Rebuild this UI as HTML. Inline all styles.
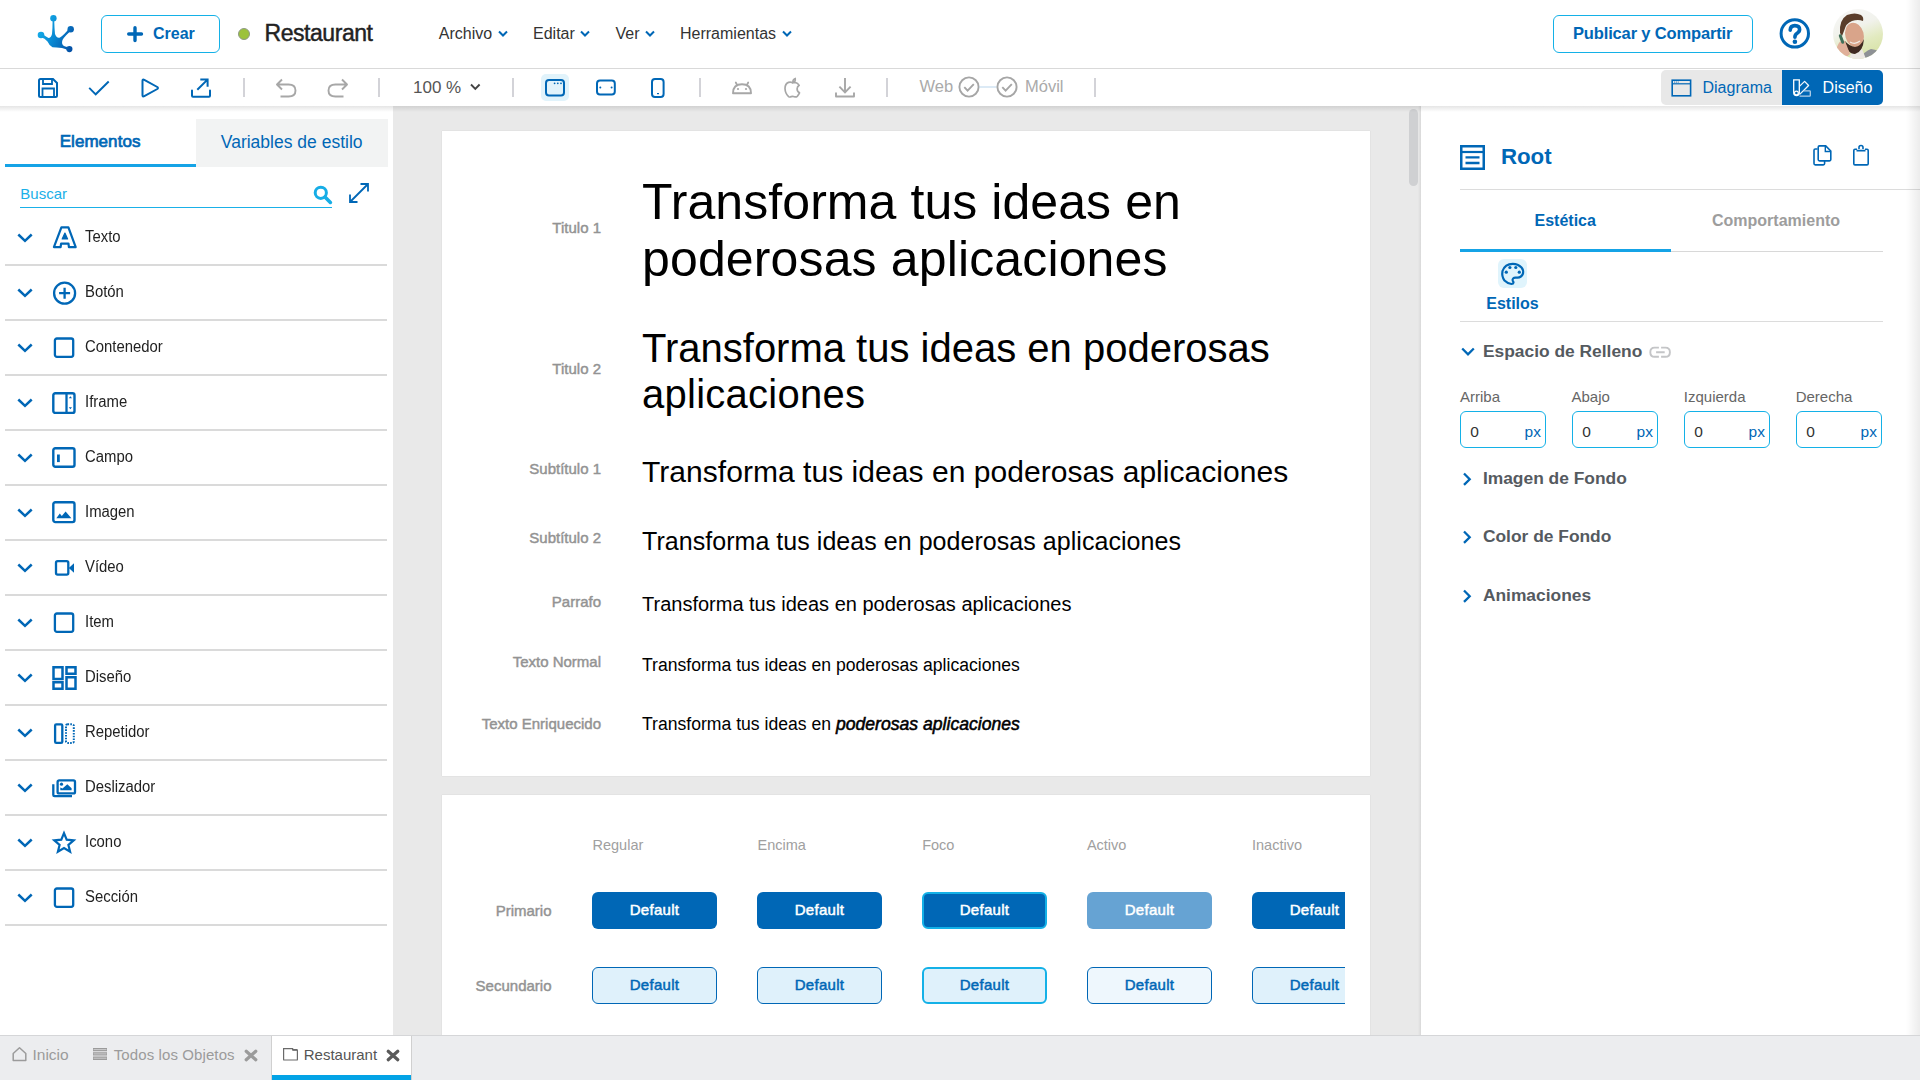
<!DOCTYPE html>
<html><head><meta charset="utf-8"><title>Restaurant</title>
<style>
html,body{margin:0;padding:0;width:1920px;height:1080px;overflow:hidden;background:#fff;}
body{position:relative;font-family:"Liberation Sans",sans-serif;}
.t{position:absolute;white-space:nowrap;}
.r{position:absolute;box-sizing:border-box;}
.s{position:absolute;overflow:visible;}
</style></head><body>
<div class="r" style="left:0px;top:0px;width:1920px;height:68px;background:#fff;"></div>
<div class="r" style="left:0px;top:68px;width:1920px;height:1px;background:#d9d9d9;"></div>
<svg class="s" style="left:30px;top:10px;" width="50" height="50" viewBox="0 0 50 50"><defs><linearGradient id="lg" gradientUnits="userSpaceOnUse" x1="9" y1="20" x2="43" y2="35"><stop offset="0" stop-color="#14abe8"/><stop offset="0.45" stop-color="#0a88d2"/><stop offset="1" stop-color="#0451a6"/></linearGradient></defs>
<g fill="url(#lg)">
<circle cx="23.4" cy="8.3" r="3.2"/><circle cx="11" cy="25" r="3.3"/><circle cx="40.7" cy="19.2" r="3.2"/><circle cx="39.4" cy="39.1" r="3.1"/>
<path d="M11,23 Q15,26 18.5,28 Q21,28 22,24 Q22.6,18 22.6,10 L24.2,10 Q24.4,18 25,24 Q26.5,28.5 30,27.5 Q34,25 39.5,18 L41.5,20.5 Q35,25.5 32.5,30 Q31,34 34,36 Q36.5,37.3 39,37 L40,41 Q36,39 32,38 Q26,37.5 22.5,37.3 Q19.5,36 17.5,31.5 Q15,28 10.5,27 Z"/>
</g></svg>
<div class="r" style="left:101px;top:15px;width:119px;height:38px;border:1.5px solid #14b1e7;border-radius:6px;"></div>
<svg class="s" style="left:127px;top:26px;" width="16" height="16" viewBox="0 0 16 16"><path d="M8,1.7V14.5M1.7,8H14.5" stroke="#0067b6" stroke-width="3.4" stroke-linecap="round"/></svg>
<div class="t" style="left:153px;top:26.00px;font-size:16px;line-height:16px;color:#0067b6;font-weight:bold;">Crear</div>
<div class="r" style="left:238px;top:27.75px;width:12px;height:12px;background:#9cc23c;border-radius:50%;border:1px solid #8f9a86;"></div>
<div class="t" style="left:264.5px;top:22.00px;font-size:23px;line-height:23px;color:#222;letter-spacing:-0.45px;-webkit-text-stroke:0.45px #222;">Restaurant</div>
<div class="t" style="left:438.75px;top:26.00px;font-size:16px;line-height:16px;color:#333;">Archivo</div>
<svg class="s" style="left:498px;top:30px;" width="10" height="8" viewBox="0 0 10 8"><path d="M1,1.5L5,5.5L9,1.5" fill="none" stroke="#0067b6" stroke-width="2"/></svg>
<div class="t" style="left:533px;top:26.00px;font-size:16px;line-height:16px;color:#333;">Editar</div>
<svg class="s" style="left:580px;top:30px;" width="10" height="8" viewBox="0 0 10 8"><path d="M1,1.5L5,5.5L9,1.5" fill="none" stroke="#0067b6" stroke-width="2"/></svg>
<div class="t" style="left:615.5px;top:26.00px;font-size:16px;line-height:16px;color:#333;">Ver</div>
<svg class="s" style="left:645px;top:30px;" width="10" height="8" viewBox="0 0 10 8"><path d="M1,1.5L5,5.5L9,1.5" fill="none" stroke="#0067b6" stroke-width="2"/></svg>
<div class="t" style="left:680px;top:26.00px;font-size:16px;line-height:16px;color:#333;">Herramientas</div>
<svg class="s" style="left:782px;top:30px;" width="10" height="8" viewBox="0 0 10 8"><path d="M1,1.5L5,5.5L9,1.5" fill="none" stroke="#0067b6" stroke-width="2"/></svg>
<div class="r" style="left:1553px;top:15px;width:200px;height:38px;border:1.5px solid #14b1e7;border-radius:6px;"></div>
<div class="t" style="left:1573px;top:25.00px;font-size:16.5px;line-height:16.5px;color:#0067b6;font-weight:bold;letter-spacing:-0.15px;">Publicar y Compartir</div>
<svg class="s" style="left:1779px;top:18px;" width="32" height="32" viewBox="0 0 32 32"><circle cx="15.8" cy="15.4" r="13.7" fill="none" stroke="#0067b6" stroke-width="3"/><path d="M11.2,12.2 Q11.4,7.6 15.9,7.6 Q20.6,7.7 20.6,11.6 Q20.6,13.8 18.2,15.2 Q15.9,16.5 15.9,19.3" fill="none" stroke="#0067b6" stroke-width="3.6" stroke-linecap="round"/><circle cx="15.9" cy="23.8" r="2.3" fill="#0067b6"/></svg>
<svg class="s" style="left:1833px;top:9px;" width="50" height="50" viewBox="0 0 50 50"><defs><clipPath id="av"><circle cx="25" cy="25" r="25"/></clipPath><linearGradient id="avbg" x1="0.2" y1="0" x2="0.6" y2="1"><stop offset="0" stop-color="#f7f7f6"/><stop offset="0.4" stop-color="#f1f2ec"/><stop offset="0.7" stop-color="#e2eabf"/><stop offset="1" stop-color="#d7e2a6"/></linearGradient><filter id="bl"><feGaussianBlur stdDeviation="0.7"/></filter></defs>
<g clip-path="url(#av)"><rect width="50" height="50" fill="url(#avbg)"/>
<g filter="url(#bl)">
<path d="M28,50 Q31,42 38,40 Q46,41 50,45 V50Z" fill="#8e9196"/>
<path d="M16,50 L19,42 L29,40 L33,50Z" fill="#ece8e4"/>
<ellipse cx="21.5" cy="26" rx="9.2" ry="12.5" fill="#d9a48a" transform="rotate(-15 21.5 26)"/>
<path d="M7,24 Q6,11 14,6 Q22,3 28,6 Q31,8 30,12 Q25,10 19,12 Q13,14 11,22 L9,27 Z" fill="#5a3d2a"/>
<path d="M12,32 Q14,45 22,45 Q30,43 31,30 Q28,37 22,38 Q16,37 12,32Z" fill="#3f2c20"/>
<path d="M17,33 Q22,36 27,32" stroke="#f3ece6" stroke-width="1.2" fill="none"/>
<path d="M4,38 Q7,30 12,32 L17,45 L11,50 L3,48 Z" fill="#e0b09a"/>
<rect x="7" y="25" width="3" height="10" rx="1.5" fill="#41705a" transform="rotate(-20 8.5 30)"/>
</g></g></svg>
<div class="r" style="left:0px;top:69px;width:1920px;height:37px;background:#fff;"></div>
<svg class="s" style="left:38px;top:78px;" width="20" height="20" viewBox="0 0 20 20"><path d="M2.5,1H15L19,5V17.5Q19,19 17.5,19H2.5Q1,19 1,17.5V2.5Q1,1 2.5,1Z" fill="none" stroke="#0067b6" stroke-width="2"/><path d="M5,1.5V6H14V1.5" fill="none" stroke="#0067b6" stroke-width="1.8"/><path d="M4.5,19V10.5H16V19" fill="none" stroke="#0067b6" stroke-width="1.8"/></svg>
<svg class="s" style="left:88px;top:80px;" width="22" height="16" viewBox="0 0 22 16"><path d="M1.2,7.8L7.7,14.3L20.7,1.5" fill="none" stroke="#0067b6" stroke-width="1.9"/></svg>
<svg class="s" style="left:140px;top:78px;" width="20" height="20" viewBox="0 0 20 20"><path d="M2.5,2.8Q2.5,0.8 4.3,1.8L17.3,9Q18.6,10 17.3,11L4.3,18.2Q2.5,19.2 2.5,17.2Z" fill="none" stroke="#0067b6" stroke-width="2" stroke-linejoin="round"/></svg>
<svg class="s" style="left:190px;top:78px;" width="22" height="20" viewBox="0 0 22 20"><path d="M2,12.5V17.8Q2,18.8 3,18.8H19Q20,18.8 20,17.8V12.5" fill="none" stroke="#0067b6" stroke-width="2" stroke-linecap="round"/><path d="M7.3,11.8L17.5,1.6M10.3,1.6H17.6V8.8" fill="none" stroke="#0067b6" stroke-width="2"/></svg>
<div class="r" style="left:243px;top:78px;width:2px;height:19px;background:#d3d3d8;"></div>
<svg class="s" style="left:275px;top:78px;" width="23" height="21" viewBox="0 0 23 21"><path d="M2,6.5H13.5Q20.5,6.5 20.5,12.5Q20.5,18.5 13.5,18.5H5.5M7,1.5L2,6.5L7,11.5" fill="none" stroke="#a7a7a7" stroke-width="1.9" stroke-linejoin="round"/></svg>
<svg class="s" style="left:326px;top:78px;" width="23" height="21" viewBox="0 0 23 21"><path d="M21,6.5H9.5Q2.5,6.5 2.5,12.5Q2.5,18.5 9.5,18.5H17.5M16,1.5L21,6.5L16,11.5" fill="none" stroke="#a7a7a7" stroke-width="1.9" stroke-linejoin="round"/></svg>
<div class="r" style="left:378px;top:78px;width:2px;height:19px;background:#d3d3d8;"></div>
<div class="t" style="left:413px;top:79.00px;font-size:17px;line-height:17px;color:#555;">100 %</div>
<svg class="s" style="left:470px;top:83px;" width="11" height="8" viewBox="0 0 11 8"><path d="M1,1.5L5.3,5.8L9.6,1.5" fill="none" stroke="#444" stroke-width="1.9"/></svg>
<div class="r" style="left:512px;top:78px;width:2px;height:19px;background:#d3d3d8;"></div>
<div class="r" style="left:541px;top:74px;width:28px;height:27px;background:#e1f3fb;border-radius:5px;"></div>
<svg class="s" style="left:545px;top:79px;" width="20" height="18" viewBox="0 0 20 18"><rect x="1" y="1" width="18" height="15.5" rx="3" fill="none" stroke="#0067b6" stroke-width="2"/><circle cx="9.6" cy="4.3" r="0.9" fill="#0067b6"/><circle cx="12.8" cy="4.3" r="0.9" fill="#0067b6"/><circle cx="16" cy="4.3" r="0.9" fill="#0067b6"/></svg>
<svg class="s" style="left:596px;top:79px;" width="20" height="18" viewBox="0 0 20 18"><rect x="1" y="1.5" width="17.8" height="14" rx="3" fill="none" stroke="#0067b6" stroke-width="2"/><circle cx="4.3" cy="8.5" r="1" fill="#0067b6"/><circle cx="15.6" cy="8.5" r="1" fill="#0067b6"/></svg>
<svg class="s" style="left:651px;top:78px;" width="14" height="20" viewBox="0 0 14 20"><rect x="1" y="1" width="11.6" height="18" rx="3" fill="none" stroke="#0067b6" stroke-width="2"/><rect x="6" y="15" width="2" height="1.2" fill="#0067b6"/></svg>
<div class="r" style="left:699px;top:78px;width:2px;height:19px;background:#d3d3d8;"></div>
<svg class="s" style="left:732px;top:78px;" width="20" height="17" viewBox="0 0 20 17"><path d="M1,15.2Q1,6.2 10,6.2Q19,6.2 19,15.2Z" fill="none" stroke="#a7a7a7" stroke-width="1.9" stroke-linejoin="round"/><path d="M5,6.8L3.8,4.5M15,6.8L16.2,4.5" stroke="#a7a7a7" stroke-width="1.8" stroke-linecap="round"/><circle cx="6" cy="11" r="1.1" fill="#a7a7a7"/><circle cx="14" cy="11" r="1.1" fill="#a7a7a7"/></svg>
<svg class="s" style="left:784px;top:77px;" width="18" height="21" viewBox="0 0 18 21"><path d="M8.8,5.8Q6.5,4.6 4.5,5.4Q1,6.8 1,11.5Q1.2,16.5 4.6,19.6Q5.8,20.4 7.3,19.6Q8.8,19 10.4,19.7Q12,20.4 13.2,19.3Q14.5,18 15.5,15.8Q13,14.5 13.1,11.8Q13.2,9.7 15.2,8.3Q13.8,5.8 11,5.3Q9.8,5.3 8.8,5.8Z" fill="none" stroke="#a7a7a7" stroke-width="1.7" stroke-linejoin="round"/><path d="M8.8,5.6Q8.6,2.3 11.3,1.5Q11.8,4.5 8.8,5.6Z" fill="none" stroke="#a7a7a7" stroke-width="1.5"/></svg>
<svg class="s" style="left:835px;top:77px;" width="20" height="21" viewBox="0 0 20 21"><path d="M10,1V16M4.4,9.6L10,15.3L15.6,9.6" fill="none" stroke="#a7a7a7" stroke-width="1.9"/><path d="M1,15.5V19.5H19V15.5" fill="none" stroke="#a7a7a7" stroke-width="1.9" stroke-linejoin="round"/></svg>
<div class="r" style="left:886px;top:78px;width:2px;height:19px;background:#d3d3d8;"></div>
<div class="t" style="left:919.5px;top:78.00px;font-size:16.5px;line-height:16.5px;color:#aaa;">Web</div>
<svg class="s" style="left:958px;top:76px;" width="62" height="22" viewBox="0 0 62 22"><circle cx="11" cy="11" r="9.6" fill="none" stroke="#a6a6a6" stroke-width="1.9"/><path d="M6.3,11.2L9.6,14.6L15.8,8.2" fill="none" stroke="#a6a6a6" stroke-width="1.9"/><path d="M21,11H38.5" stroke="#b9d5ec" stroke-width="1"/><circle cx="49" cy="11" r="9.6" fill="none" stroke="#a6a6a6" stroke-width="1.9"/><path d="M44.3,11.2L47.6,14.6L53.8,8.2" fill="none" stroke="#a6a6a6" stroke-width="1.9"/></svg>
<div class="t" style="left:1025px;top:78.00px;font-size:16.5px;line-height:16.5px;color:#aaa;">Móvil</div>
<div class="r" style="left:1094px;top:78px;width:2px;height:19px;background:#d3d3d8;"></div>
<div class="r" style="left:1661px;top:70px;width:222px;height:35px;background:#e8e8e8;border-radius:5px;"></div>
<div class="r" style="left:1782px;top:70px;width:101px;height:35px;background:#0067b6;border-radius:0 5px 5px 0;"></div>
<svg class="s" style="left:1671px;top:79px;" width="21" height="18" viewBox="0 0 21 18"><rect x="1.2" y="1.2" width="18.4" height="15.6" fill="none" stroke="#0067b6" stroke-width="1.6"/><path d="M1.2,4.8H19.6" stroke="#0067b6" stroke-width="1.2"/><circle cx="3.6" cy="3" r="0.6" fill="#0067b6"/><circle cx="5.4" cy="3" r="0.6" fill="#0067b6"/><circle cx="7.2" cy="3" r="0.6" fill="#0067b6"/></svg>
<div class="t" style="left:1702.5px;top:80.00px;font-size:16px;line-height:16px;color:#0067b6;">Diagrama</div>
<svg class="s" style="left:1792px;top:79px;" width="20" height="18" viewBox="0 0 20 18"><path d="M1.7,0.8H7.3V13.8Q7.3,16.5 4.5,16.5Q1.7,16.5 1.7,13.8Z" fill="none" stroke="#fff" stroke-width="1.3"/><circle cx="4.4" cy="14" r="1.9" fill="none" stroke="#fff" stroke-width="1.2"/><path d="M7.4,7.4L12.6,2.4L16.6,6.5L7.7,15.4" fill="none" stroke="#f2f6fb" stroke-width="1.3" stroke-linejoin="round"/><path d="M11.6,11.8H17.6Q18.3,11.8 18.3,12.5V16.4Q18.3,17.1 17.6,17.1H7.5" fill="none" stroke="#b3cfe8" stroke-width="1.3"/></svg>
<div class="t" style="left:1822.6px;top:80.00px;font-size:16px;line-height:16px;color:#fff;">Diseño</div>
<div class="r" style="left:0px;top:106px;width:393px;height:929px;background:#fff;"></div>
<div class="r" style="left:196px;top:119px;width:192px;height:48px;background:#f2f3f3;"></div>
<div class="r" style="left:5px;top:164px;width:191px;height:3px;background:#15a3e6;"></div>
<div class="t" style="left:59.7px;top:133.00px;font-size:17px;line-height:17px;color:#0067b6;letter-spacing:0.05px;-webkit-text-stroke:0.7px #0067b6;">Elementos</div>
<div class="t" style="left:220.8px;top:134.00px;font-size:17.5px;line-height:17.5px;color:#0067b6;">Variables de estilo</div>
<div class="t" style="left:20.3px;top:186.00px;font-size:15px;line-height:15px;color:#1ab0e8;">Buscar</div>
<div class="r" style="left:20px;top:207px;width:312px;height:1.2px;background:#1ab0e8;"></div>
<svg class="s" style="left:313px;top:185px;" width="20" height="19" viewBox="0 0 20 19"><circle cx="7.8" cy="7.8" r="5.6" fill="none" stroke="#16ade6" stroke-width="3"/><path d="M12,12L17.4,17.4" stroke="#16ade6" stroke-width="3.6" stroke-linecap="round"/></svg>
<svg class="s" style="left:348px;top:182px;" width="22" height="22" viewBox="0 0 22 22"><path d="M2,20L20,2M12.5,2H20V9.5M2,12.5V20H9.5" fill="none" stroke="#0067b6" stroke-width="1.8"/></svg>
<svg class="s" style="left:17px;top:232.5px;" width="16" height="10" viewBox="0 0 16 10"><path d="M1.3,1.5L8,7.8L14.7,1.5" fill="none" stroke="#0067b6" stroke-width="2.5"/></svg>
<svg class="s" style="left:52px;top:226.0px;" width="25" height="24" viewBox="0 0 25 24"><path d="M9.4,1.4H16.4L23.7,21.1H16.9L16.5,17.7H9.1L8.6,21.1H1.9Z" fill="none" stroke="#0067b6" stroke-width="2.2" stroke-linejoin="round"/><path d="M12.9,7L15.6,13H10.2Z" fill="#0067b6" stroke="#0067b6" stroke-width="1.2" stroke-linejoin="round"/></svg>
<div class="t" style="left:85.3px;top:229.00px;font-size:16px;line-height:16px;color:#222;transform:scaleX(0.93);transform-origin:0 0;">Texto</div>
<div class="r" style="left:5px;top:264.0px;width:382px;height:2px;background:#dadada;"></div>
<svg class="s" style="left:17px;top:287.5px;" width="16" height="10" viewBox="0 0 16 10"><path d="M1.3,1.5L8,7.8L14.7,1.5" fill="none" stroke="#0067b6" stroke-width="2.5"/></svg>
<svg class="s" style="left:52px;top:281.5px;" width="25" height="24" viewBox="0 0 25 24"><circle cx="12.6" cy="11.2" r="10.5" fill="none" stroke="#0067b6" stroke-width="2.3"/><path d="M12.6,5.7V16.7M7.1,11.2H18.1" stroke="#0067b6" stroke-width="2.3"/></svg>
<div class="t" style="left:85.3px;top:284.00px;font-size:16px;line-height:16px;color:#222;transform:scaleX(0.93);transform-origin:0 0;">Botón</div>
<div class="r" style="left:5px;top:319.0px;width:382px;height:2px;background:#dadada;"></div>
<svg class="s" style="left:17px;top:342.5px;" width="16" height="10" viewBox="0 0 16 10"><path d="M1.3,1.5L8,7.8L14.7,1.5" fill="none" stroke="#0067b6" stroke-width="2.5"/></svg>
<svg class="s" style="left:52px;top:337.0px;" width="25" height="24" viewBox="0 0 25 24"><rect x="2.9" y="1.5" width="18.3" height="18.3" rx="2" fill="none" stroke="#0067b6" stroke-width="2.3"/></svg>
<div class="t" style="left:85.3px;top:339.00px;font-size:16px;line-height:16px;color:#222;transform:scaleX(0.93);transform-origin:0 0;">Contenedor</div>
<div class="r" style="left:5px;top:374.0px;width:382px;height:2px;background:#dadada;"></div>
<svg class="s" style="left:17px;top:397.5px;" width="16" height="10" viewBox="0 0 16 10"><path d="M1.3,1.5L8,7.8L14.7,1.5" fill="none" stroke="#0067b6" stroke-width="2.5"/></svg>
<svg class="s" style="left:52px;top:391.5px;" width="25" height="24" viewBox="0 0 25 24"><rect x="1.3" y="1.3" width="21.2" height="19.6" rx="2" fill="none" stroke="#0067b6" stroke-width="2.4"/><path d="M14.5,1.3V21" stroke="#0067b6" stroke-width="2.3"/><path d="M16.8,6.3L18.4,4.3L20,6.3ZM16.8,15.3L18.4,17.3L20,15.3Z" fill="#0067b6"/></svg>
<div class="t" style="left:85.3px;top:394.00px;font-size:16px;line-height:16px;color:#222;transform:scaleX(0.93);transform-origin:0 0;">Iframe</div>
<div class="r" style="left:5px;top:429.0px;width:382px;height:2px;background:#dadada;"></div>
<svg class="s" style="left:17px;top:452.5px;" width="16" height="10" viewBox="0 0 16 10"><path d="M1.3,1.5L8,7.8L14.7,1.5" fill="none" stroke="#0067b6" stroke-width="2.5"/></svg>
<svg class="s" style="left:52px;top:446.5px;" width="25" height="24" viewBox="0 0 25 24"><rect x="1.3" y="1.3" width="21.2" height="18.4" rx="2" fill="none" stroke="#0067b6" stroke-width="2.4"/><rect x="5" y="7.5" width="2.8" height="7.6" fill="#0067b6"/></svg>
<div class="t" style="left:85.3px;top:449.00px;font-size:16px;line-height:16px;color:#222;transform:scaleX(0.93);transform-origin:0 0;">Campo</div>
<div class="r" style="left:5px;top:484.0px;width:382px;height:2px;background:#dadada;"></div>
<svg class="s" style="left:17px;top:507.5px;" width="16" height="10" viewBox="0 0 16 10"><path d="M1.3,1.5L8,7.8L14.7,1.5" fill="none" stroke="#0067b6" stroke-width="2.5"/></svg>
<svg class="s" style="left:52px;top:500.5px;" width="25" height="24" viewBox="0 0 25 24"><rect x="1.3" y="1.3" width="21.2" height="19.8" rx="2" fill="none" stroke="#0067b6" stroke-width="2.4"/><path d="M4.3,17.2L7.8,12.6L9.8,15L13.6,10.5L19.4,17.2Z" fill="#0067b6"/></svg>
<div class="t" style="left:85.3px;top:504.00px;font-size:16px;line-height:16px;color:#222;transform:scaleX(0.93);transform-origin:0 0;">Imagen</div>
<div class="r" style="left:5px;top:539.0px;width:382px;height:2px;background:#dadada;"></div>
<svg class="s" style="left:17px;top:562.5px;" width="16" height="10" viewBox="0 0 16 10"><path d="M1.3,1.5L8,7.8L14.7,1.5" fill="none" stroke="#0067b6" stroke-width="2.5"/></svg>
<svg class="s" style="left:52px;top:558.5px;" width="25" height="24" viewBox="0 0 25 24"><rect x="4" y="2.2" width="12.3" height="13.5" rx="1.6" fill="none" stroke="#0067b6" stroke-width="2.3"/><path d="M16.8,9L22,4.2V13.8Z" fill="#0067b6"/></svg>
<div class="t" style="left:85.3px;top:559.00px;font-size:16px;line-height:16px;color:#222;transform:scaleX(0.93);transform-origin:0 0;">Vídeo</div>
<div class="r" style="left:5px;top:594.0px;width:382px;height:2px;background:#dadada;"></div>
<svg class="s" style="left:17px;top:617.5px;" width="16" height="10" viewBox="0 0 16 10"><path d="M1.3,1.5L8,7.8L14.7,1.5" fill="none" stroke="#0067b6" stroke-width="2.5"/></svg>
<svg class="s" style="left:52px;top:612.0px;" width="25" height="24" viewBox="0 0 25 24"><rect x="2.9" y="1.5" width="18.3" height="18.3" rx="2" fill="none" stroke="#0067b6" stroke-width="2.3"/></svg>
<div class="t" style="left:85.3px;top:614.00px;font-size:16px;line-height:16px;color:#222;transform:scaleX(0.93);transform-origin:0 0;">Item</div>
<div class="r" style="left:5px;top:649.0px;width:382px;height:2px;background:#dadada;"></div>
<svg class="s" style="left:17px;top:672.5px;" width="16" height="10" viewBox="0 0 16 10"><path d="M1.3,1.5L8,7.8L14.7,1.5" fill="none" stroke="#0067b6" stroke-width="2.5"/></svg>
<svg class="s" style="left:52px;top:665.5px;" width="25" height="24" viewBox="0 0 25 24"><path d="M1.5,1.2H10.5V13H1.5ZM14.5,1.2H23.5V7.8H14.5ZM1.5,16.2H10.5V22.8H1.5ZM14.5,11.2H23.5V22.8H14.5Z" fill="none" stroke="#0067b6" stroke-width="2.5"/></svg>
<div class="t" style="left:85.3px;top:669.00px;font-size:16px;line-height:16px;color:#222;transform:scaleX(0.93);transform-origin:0 0;">Diseño</div>
<div class="r" style="left:5px;top:704.0px;width:382px;height:2px;background:#dadada;"></div>
<svg class="s" style="left:17px;top:727.5px;" width="16" height="10" viewBox="0 0 16 10"><path d="M1.3,1.5L8,7.8L14.7,1.5" fill="none" stroke="#0067b6" stroke-width="2.5"/></svg>
<svg class="s" style="left:52px;top:722.5px;" width="25" height="24" viewBox="0 0 25 24"><rect x="3.1" y="1.3" width="7.2" height="18.6" rx="1.2" fill="none" stroke="#0067b6" stroke-width="2.3"/><rect x="14" y="1.3" width="7.8" height="18.6" rx="1.5" fill="none" stroke="#0067b6" stroke-width="2" stroke-dasharray="1.6 1.2"/></svg>
<div class="t" style="left:85.3px;top:724.00px;font-size:16px;line-height:16px;color:#222;transform:scaleX(0.93);transform-origin:0 0;">Repetidor</div>
<div class="r" style="left:5px;top:759.0px;width:382px;height:2px;background:#dadada;"></div>
<svg class="s" style="left:17px;top:782.5px;" width="16" height="10" viewBox="0 0 16 10"><path d="M1.3,1.5L8,7.8L14.7,1.5" fill="none" stroke="#0067b6" stroke-width="2.5"/></svg>
<svg class="s" style="left:52px;top:778.5px;" width="25" height="24" viewBox="0 0 25 24"><rect x="5.6" y="1.4" width="17.4" height="13" rx="1.5" fill="none" stroke="#0067b6" stroke-width="2.3"/><path d="M1.3,5.3V16Q1.3,17.2 2.6,17.2H20" fill="none" stroke="#0067b6" stroke-width="2.3"/><circle cx="9.5" cy="5.2" r="1.6" fill="#0067b6"/><path d="M8.3,11.3V8.5L10.5,9.6L15.3,5.3L19.6,9.3V11.3Z" fill="#0067b6"/></svg>
<div class="t" style="left:85.3px;top:779.00px;font-size:16px;line-height:16px;color:#222;transform:scaleX(0.93);transform-origin:0 0;">Deslizador</div>
<div class="r" style="left:5px;top:814.0px;width:382px;height:2px;background:#dadada;"></div>
<svg class="s" style="left:17px;top:837.5px;" width="16" height="10" viewBox="0 0 16 10"><path d="M1.3,1.5L8,7.8L14.7,1.5" fill="none" stroke="#0067b6" stroke-width="2.5"/></svg>
<svg class="s" style="left:52px;top:831.0px;" width="25" height="24" viewBox="0 0 25 24"><path d="M12,2.2L14.7,8.7L21.7,9.3L16.4,13.9L18.1,20.8L12,17.1L5.9,20.8L7.6,13.9L2.3,9.3L9.3,8.7Z" fill="none" stroke="#0067b6" stroke-width="2.2" stroke-linejoin="miter"/></svg>
<div class="t" style="left:85.3px;top:834.00px;font-size:16px;line-height:16px;color:#222;transform:scaleX(0.93);transform-origin:0 0;">Icono</div>
<div class="r" style="left:5px;top:869.0px;width:382px;height:2px;background:#dadada;"></div>
<svg class="s" style="left:17px;top:892.5px;" width="16" height="10" viewBox="0 0 16 10"><path d="M1.3,1.5L8,7.8L14.7,1.5" fill="none" stroke="#0067b6" stroke-width="2.5"/></svg>
<svg class="s" style="left:52px;top:887.0px;" width="25" height="24" viewBox="0 0 25 24"><rect x="2.9" y="1.5" width="18.3" height="18.3" rx="2" fill="none" stroke="#0067b6" stroke-width="2.3"/></svg>
<div class="t" style="left:85.3px;top:889.00px;font-size:16px;line-height:16px;color:#222;transform:scaleX(0.93);transform-origin:0 0;">Sección</div>
<div class="r" style="left:5px;top:924.0px;width:382px;height:2px;background:#dadada;"></div>
<div class="r" style="left:393px;top:106px;width:1028px;height:929px;background:#e9e9e9;"></div>
<div class="r" style="left:442px;top:131px;width:928px;height:645px;background:#fff;box-shadow:0 0 1px rgba(0,0,0,0.15);"></div>
<div class="t" style="left:auto;right:1319px;top:220.00px;font-size:15px;line-height:15px;color:#939393;-webkit-text-stroke:0.45px #939393;">Titulo 1</div>
<div class="t" style="left:642px;top:177.00px;font-size:50px;line-height:50px;color:#000;letter-spacing:0.07px;">Transforma tus ideas en</div>
<div class="t" style="left:642px;top:234.00px;font-size:50px;line-height:50px;color:#000;letter-spacing:0.14px;">poderosas aplicaciones</div>
<div class="t" style="left:auto;right:1319px;top:361.00px;font-size:15px;line-height:15px;color:#939393;-webkit-text-stroke:0.45px #939393;">Titulo 2</div>
<div class="t" style="left:642px;top:328.00px;font-size:40px;line-height:40px;color:#000;">Transforma tus ideas en poderosas</div>
<div class="t" style="left:642px;top:374.00px;font-size:40px;line-height:40px;color:#000;letter-spacing:0.25px;">aplicaciones</div>
<div class="t" style="left:auto;right:1319px;top:461.00px;font-size:15px;line-height:15px;color:#939393;-webkit-text-stroke:0.45px #939393;">Subtítulo 1</div>
<div class="t" style="left:642px;top:457.00px;font-size:30px;line-height:30px;color:#000;letter-spacing:0.045px;">Transforma tus ideas en poderosas aplicaciones</div>
<div class="t" style="left:auto;right:1319px;top:530.00px;font-size:15px;line-height:15px;color:#939393;-webkit-text-stroke:0.45px #939393;">Subtítulo 2</div>
<div class="t" style="left:642px;top:529.00px;font-size:25px;line-height:25px;color:#000;letter-spacing:0.045px;">Transforma tus ideas en poderosas aplicaciones</div>
<div class="t" style="left:auto;right:1319px;top:594.00px;font-size:15px;line-height:15px;color:#939393;-webkit-text-stroke:0.45px #939393;">Parrafo</div>
<div class="t" style="left:642px;top:594.00px;font-size:20px;line-height:20px;color:#000;">Transforma tus ideas en poderosas aplicaciones</div>
<div class="t" style="left:auto;right:1319px;top:654.00px;font-size:15px;line-height:15px;color:#939393;-webkit-text-stroke:0.45px #939393;">Texto Normal</div>
<div class="t" style="left:642px;top:657.00px;font-size:17.6px;line-height:17.6px;color:#000;">Transforma tus ideas en poderosas aplicaciones</div>
<div class="t" style="left:auto;right:1319px;top:716.00px;font-size:15px;line-height:15px;color:#939393;-webkit-text-stroke:0.45px #939393;">Texto Enriquecido</div>
<div class="t" style="left:642px;top:716.00px;font-size:17.6px;line-height:17.6px;color:#000;">Transforma tus ideas en <i style="-webkit-text-stroke:0.55px #000">poderosas aplicaciones</i></div>
<div class="r" style="left:442px;top:795px;width:928px;height:240px;background:#fff;box-shadow:0 0 1px rgba(0,0,0,0.15);"></div>
<div class="t" style="left:592.5px;top:838.00px;font-size:14.5px;line-height:14.5px;color:#a0a0a0;">Regular</div>
<div class="t" style="left:757.5px;top:838.00px;font-size:14.5px;line-height:14.5px;color:#a0a0a0;">Encima</div>
<div class="t" style="left:922.2px;top:838.00px;font-size:14.5px;line-height:14.5px;color:#a0a0a0;">Foco</div>
<div class="t" style="left:1086.9px;top:838.00px;font-size:14.5px;line-height:14.5px;color:#a0a0a0;">Activo</div>
<div class="t" style="left:1252px;top:838.00px;font-size:14.5px;line-height:14.5px;color:#a0a0a0;">Inactivo</div>
<div class="t" style="left:auto;right:1368.5px;top:903.00px;font-size:15px;line-height:15px;color:#939393;-webkit-text-stroke:0.45px #939393;">Primario</div>
<div class="t" style="left:auto;right:1368.5px;top:978.00px;font-size:15px;line-height:15px;color:#939393;-webkit-text-stroke:0.45px #939393;">Secundario</div>
<div style="position:absolute;left:442px;top:795px;width:903px;height:240px;overflow:hidden;"><div class="r" style="left:150px;top:97px;width:125px;height:37px;background:#0067b6;border:none;border-radius:6px;"></div>
<div class="t" style="left:150px;top:96px;width:125px;text-align:center;font-size:15px;line-height:37px;color:#fff;font-weight:normal;letter-spacing:0.3px;-webkit-text-stroke:0.5px #fff;">Default</div><div class="r" style="left:150px;top:172px;width:125px;height:37px;background:#dff1fb;border:1px solid #0067b6;border-radius:6px;"></div>
<div class="t" style="left:150px;top:171px;width:125px;text-align:center;font-size:15px;line-height:37px;color:#0067b6;font-weight:normal;letter-spacing:0.3px;-webkit-text-stroke:0.5px #0067b6;">Default</div><div class="r" style="left:315px;top:97px;width:125px;height:37px;background:#0067b6;border:none;border-radius:6px;"></div>
<div class="t" style="left:315px;top:96px;width:125px;text-align:center;font-size:15px;line-height:37px;color:#fff;font-weight:normal;letter-spacing:0.3px;-webkit-text-stroke:0.5px #fff;">Default</div><div class="r" style="left:315px;top:172px;width:125px;height:37px;background:#dff1fb;border:1px solid #0067b6;border-radius:6px;"></div>
<div class="t" style="left:315px;top:171px;width:125px;text-align:center;font-size:15px;line-height:37px;color:#0067b6;font-weight:normal;letter-spacing:0.3px;-webkit-text-stroke:0.5px #0067b6;">Default</div><div class="r" style="left:480px;top:97px;width:125px;height:37px;background:#0067b6;border:2px solid #14b1e7;border-radius:6px;"></div>
<div class="t" style="left:480px;top:96px;width:125px;text-align:center;font-size:15px;line-height:37px;color:#fff;font-weight:normal;letter-spacing:0.3px;-webkit-text-stroke:0.5px #fff;">Default</div><div class="r" style="left:480px;top:172px;width:125px;height:37px;background:#dff1fb;border:2px solid #14b1e7;border-radius:6px;"></div>
<div class="t" style="left:480px;top:171px;width:125px;text-align:center;font-size:15px;line-height:37px;color:#0067b6;font-weight:normal;letter-spacing:0.3px;-webkit-text-stroke:0.5px #0067b6;">Default</div><div class="r" style="left:645px;top:97px;width:125px;height:37px;background:#66a3d3;border:none;border-radius:6px;"></div>
<div class="t" style="left:645px;top:96px;width:125px;text-align:center;font-size:15px;line-height:37px;color:#fff;font-weight:normal;letter-spacing:0.3px;-webkit-text-stroke:0.5px #fff;">Default</div><div class="r" style="left:645px;top:172px;width:125px;height:37px;background:#eef7fd;border:1px solid #0067b6;border-radius:6px;"></div>
<div class="t" style="left:645px;top:171px;width:125px;text-align:center;font-size:15px;line-height:37px;color:#0067b6;font-weight:normal;letter-spacing:0.3px;-webkit-text-stroke:0.5px #0067b6;">Default</div><div class="r" style="left:810px;top:97px;width:125px;height:37px;background:#0067b6;border:none;border-radius:6px;"></div>
<div class="t" style="left:810px;top:96px;width:125px;text-align:center;font-size:15px;line-height:37px;color:#fff;font-weight:normal;letter-spacing:0.3px;-webkit-text-stroke:0.5px #fff;">Default</div><div class="r" style="left:810px;top:172px;width:125px;height:37px;background:#dff1fb;border:1px solid #0067b6;border-radius:6px;"></div>
<div class="t" style="left:810px;top:171px;width:125px;text-align:center;font-size:15px;line-height:37px;color:#0067b6;font-weight:normal;letter-spacing:0.3px;-webkit-text-stroke:0.5px #0067b6;">Default</div></div><div class="r" style="left:1409px;top:109px;width:9px;height:77px;background:#cfd0d2;border-radius:5px;"></div>
<div class="r" style="left:1421px;top:106px;width:499px;height:929px;background:#fff;"></div>
<div class="r" style="left:1418px;top:106px;width:3px;height:929px;background:linear-gradient(to right,rgba(0,0,0,0),rgba(0,0,0,0.07));"></div>
<svg class="s" style="left:1460px;top:145px;" width="25" height="25" viewBox="0 0 25 25"><rect x="1.25" y="1.25" width="22.5" height="22.5" fill="none" stroke="#0067b6" stroke-width="2.5"/><path d="M1.25,7H23.75" stroke="#0067b6" stroke-width="2.2"/><path d="M5.5,12.4H19.5M5.5,18H19.5" stroke="#0067b6" stroke-width="2.3"/></svg>
<div class="t" style="left:1500.9px;top:146.00px;font-size:22.3px;line-height:22.3px;color:#0067b6;font-weight:bold;">Root</div>
<svg class="s" style="left:1812px;top:144px;" width="20" height="22" viewBox="0 0 20 22"><path d="M5.5,5H3.3Q2,5 2,6.3V19.6Q2,20.9 3.3,20.9H11.3Q12.6,20.9 12.6,19.6V17" fill="none" stroke="#0067b6" stroke-width="1.6"/><path d="M7.5,1.9H13.7L18.8,7V15.6Q18.8,16.9 17.5,16.9H7.5Q6.2,16.9 6.2,15.6V3.2Q6.2,1.9 7.5,1.9Z" fill="none" stroke="#0067b6" stroke-width="1.6"/><path d="M13.3,2V7.5H18.8" fill="none" stroke="#0067b6" stroke-width="1.4"/></svg>
<svg class="s" style="left:1852px;top:144px;" width="18" height="22" viewBox="0 0 18 22"><path d="M5,5.2H3Q1.8,5.2 1.8,6.4V19.7Q1.8,20.9 3,20.9H15Q16.2,20.9 16.2,19.7V6.4Q16.2,5.2 15,5.2H13" fill="none" stroke="#0067b6" stroke-width="1.6"/><path d="M7,5V3.2Q7,1.5 9,1.5Q11,1.5 11,3.2V5M4.5,6.6H13.5" fill="none" stroke="#0067b6" stroke-width="1.6"/></svg>
<div class="r" style="left:1460px;top:189px;width:460px;height:1px;background:#dcdcdc;"></div>
<div class="t" style="left:1534.5px;top:213.00px;font-size:16px;line-height:16px;color:#0067b6;font-weight:bold;">Estética</div>
<div class="t" style="left:1712px;top:213.00px;font-size:16px;line-height:16px;color:#9d9d9d;font-weight:bold;">Comportamiento</div>
<div class="r" style="left:1460px;top:251px;width:423px;height:1px;background:#d8d8d8;"></div>
<div class="r" style="left:1460px;top:249px;width:211px;height:3px;background:#15a3e6;"></div>
<div class="r" style="left:1498px;top:258.7px;width:29px;height:29.3px;background:#e0f4fc;border-radius:6px;"></div>
<svg class="s" style="left:1500px;top:261px;" width="26" height="25" viewBox="0 0 26 25"><path d="M12.8,2.8Q5,2.8 2.5,10Q1.5,15.5 4.5,19.5Q7.5,22.5 11.5,23Q13.3,23 13.5,21.5Q13.5,20.5 12.7,19.7Q12.2,18.3 13.3,17.3Q14,16.6 15.5,16.6H17.5Q21.5,16.6 23,12.5Q23.7,9 21.5,6.5Q18,2.8 12.8,2.8Z" fill="none" stroke="#0067b6" stroke-width="2.2" stroke-linejoin="round"/><circle cx="6.3" cy="11.2" r="1.6" fill="#0067b6"/><circle cx="9.9" cy="6.5" r="1.6" fill="#0067b6"/><circle cx="15.8" cy="6.5" r="1.6" fill="#0067b6"/><circle cx="19.3" cy="11.2" r="1.6" fill="#0067b6"/></svg>
<div class="t" style="left:1486.25px;top:296.00px;font-size:16px;line-height:16px;color:#0067b6;font-weight:bold;">Estilos</div>
<div class="r" style="left:1460px;top:321px;width:423px;height:1px;background:#dcdcdc;"></div>
<svg class="s" style="left:1461px;top:347px;" width="15" height="10" viewBox="0 0 15 10"><path d="M1.2,1.5L7,7.3L12.8,1.5" fill="none" stroke="#0067b6" stroke-width="2.3"/></svg>
<div class="t" style="left:1482.9px;top:343.00px;font-size:17.4px;line-height:17.4px;color:#555a5f;font-weight:bold;">Espacio de Relleno</div>
<svg class="s" style="left:1648px;top:345px;" width="24" height="14" viewBox="0 0 24 14"><path d="M10.9,2.6H6.6Q2.3,2.6 2.3,7.2Q2.3,11.8 6.6,11.8H10.9M13.1,2.6H17.4Q21.9,2.6 21.9,7.2Q21.9,11.8 17.4,11.8H13.1M8.1,7.2H16.7" fill="none" stroke="#c4c5c7" stroke-width="1.9"/></svg>
<div class="t" style="left:1460px;top:389.00px;font-size:15px;line-height:15px;color:#666;">Arriba</div>
<div class="r" style="left:1460px;top:411px;width:86px;height:37px;border:1.5px solid #14b1e7;border-radius:6px;"></div>
<div class="t" style="left:1470.3px;top:424.00px;font-size:15.5px;line-height:15.5px;color:#333;">0</div>
<div class="t" style="left:1524.6px;top:424.00px;font-size:15.5px;line-height:15.5px;color:#0067b6;">px</div>
<div class="t" style="left:1571.5px;top:389.00px;font-size:15px;line-height:15px;color:#666;">Abajo</div>
<div class="r" style="left:1572px;top:411px;width:86px;height:37px;border:1.5px solid #14b1e7;border-radius:6px;"></div>
<div class="t" style="left:1582.3px;top:424.00px;font-size:15.5px;line-height:15.5px;color:#333;">0</div>
<div class="t" style="left:1636.6px;top:424.00px;font-size:15.5px;line-height:15.5px;color:#0067b6;">px</div>
<div class="t" style="left:1683.8px;top:389.00px;font-size:15px;line-height:15px;color:#666;">Izquierda</div>
<div class="r" style="left:1684px;top:411px;width:86px;height:37px;border:1.5px solid #14b1e7;border-radius:6px;"></div>
<div class="t" style="left:1694.3px;top:424.00px;font-size:15.5px;line-height:15.5px;color:#333;">0</div>
<div class="t" style="left:1748.6px;top:424.00px;font-size:15.5px;line-height:15.5px;color:#0067b6;">px</div>
<div class="t" style="left:1795.7px;top:389.00px;font-size:15px;line-height:15px;color:#666;">Derecha</div>
<div class="r" style="left:1796px;top:411px;width:86px;height:37px;border:1.5px solid #14b1e7;border-radius:6px;"></div>
<div class="t" style="left:1806.3px;top:424.00px;font-size:15.5px;line-height:15.5px;color:#333;">0</div>
<div class="t" style="left:1860.6px;top:424.00px;font-size:15.5px;line-height:15.5px;color:#0067b6;">px</div>
<svg class="s" style="left:1462px;top:471.7px;" width="10" height="14" viewBox="0 0 10 14"><path d="M2,1.5L7.7,7.2L2,12.9" fill="none" stroke="#0067b6" stroke-width="2.3"/></svg>
<div class="t" style="left:1482.9px;top:470.00px;font-size:17.4px;line-height:17.4px;color:#555a5f;font-weight:bold;">Imagen de Fondo</div>
<svg class="s" style="left:1462px;top:529.7px;" width="10" height="14" viewBox="0 0 10 14"><path d="M2,1.5L7.7,7.2L2,12.9" fill="none" stroke="#0067b6" stroke-width="2.3"/></svg>
<div class="t" style="left:1482.9px;top:528.00px;font-size:17.4px;line-height:17.4px;color:#555a5f;font-weight:bold;">Color de Fondo</div>
<svg class="s" style="left:1462px;top:588.7px;" width="10" height="14" viewBox="0 0 10 14"><path d="M2,1.5L7.7,7.2L2,12.9" fill="none" stroke="#0067b6" stroke-width="2.3"/></svg>
<div class="t" style="left:1482.9px;top:587.00px;font-size:17.4px;line-height:17.4px;color:#555a5f;font-weight:bold;">Animaciones</div>
<div class="r" style="left:0px;top:1035px;width:1920px;height:45px;background:#ecedef;"></div>
<div class="r" style="left:0px;top:1035px;width:1920px;height:1px;background:#d5d6d8;"></div>
<svg class="s" style="left:11px;top:1046px;" width="17" height="16" viewBox="0 0 17 16"><path d="M2.2,7.5L8.5,1.8L14.8,7.5V14.5H2.2Z" fill="none" stroke="#9b9b9b" stroke-width="1.5" stroke-linejoin="round"/></svg>
<div class="t" style="left:32.5px;top:1047.00px;font-size:15.5px;line-height:15.5px;color:#9b9b9b;">Inicio</div>
<svg class="s" style="left:92px;top:1047px;" width="16" height="14" viewBox="0 0 16 14"><path d="M1,1H15V4.3H1ZM1,5.3H15V8.6H1ZM1,9.6H15V12.9H1Z" fill="#9b9b9b" /><path d="M1.5,2.6H14.5M1.5,6.9H14.5M1.5,11.2H14.5" stroke="#ecedef" stroke-width="0.6"/></svg>
<div class="t" style="left:113.75px;top:1047.00px;font-size:15px;line-height:15px;color:#9b9b9b;letter-spacing:0.1px;">Todos los Objetos</div>
<svg class="s" style="left:244px;top:1049px;" width="14" height="13" viewBox="0 0 14 13"><path d="M2.2,2.2L11.8,10.8M11.8,2.2L2.2,10.8" stroke="#9b9b9b" stroke-width="3.2" stroke-linecap="round"/></svg>
<div class="r" style="left:272px;top:1036px;width:139px;height:44px;background:#fff;"></div>
<div class="r" style="left:272px;top:1075px;width:139px;height:5px;background:#03a3e6;"></div>
<div class="r" style="left:271px;top:1036px;width:1px;height:44px;background:#d0d0d0;"></div>
<div class="r" style="left:411px;top:1036px;width:1px;height:44px;background:#d0d0d0;"></div>
<svg class="s" style="left:282px;top:1047px;" width="17" height="14" viewBox="0 0 17 14"><path d="M1.6,1.6H10.5L11.5,2.6H14.6Q15.4,2.6 15.4,3.4V12.4Q15.4,13 14.8,13H2.2Q1.6,13 1.6,12.4Z" fill="none" stroke="#6a6a6a" stroke-width="1.2"/><path d="M10.5,1.6V3.3H15.2" fill="none" stroke="#6a6a6a" stroke-width="1"/></svg>
<div class="t" style="left:303.75px;top:1047.00px;font-size:15px;line-height:15px;color:#555;">Restaurant</div>
<svg class="s" style="left:386px;top:1049px;" width="14" height="13" viewBox="0 0 14 13"><path d="M2.2,2.2L11.8,10.8M11.8,2.2L2.2,10.8" stroke="#5a5a5a" stroke-width="3.2" stroke-linecap="round"/></svg>
<div class="r" style="left:0px;top:106px;width:1920px;height:6px;background:linear-gradient(to bottom,rgba(0,0,0,0.10),rgba(0,0,0,0));"></div>
<div class="r" style="left:1906px;top:0px;width:14px;height:1035px;background:linear-gradient(to right,rgba(0,0,0,0),rgba(0,0,0,0.075));"></div>
</body></html>
